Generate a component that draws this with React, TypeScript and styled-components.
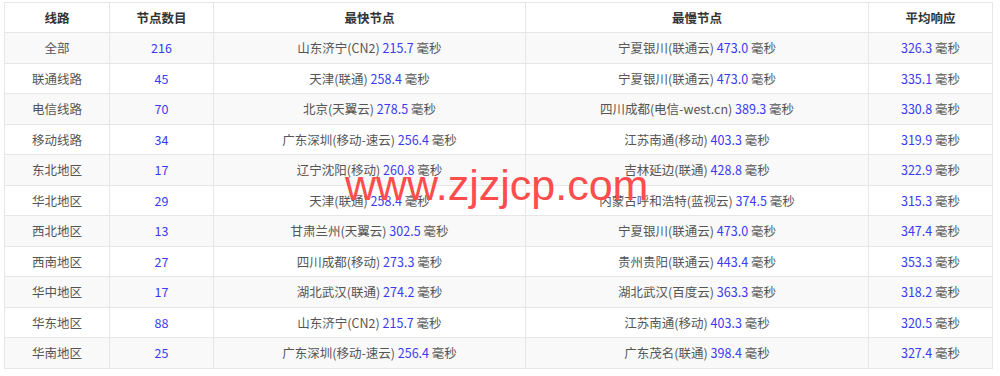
import React from "react";
import styled, { createGlobalStyle } from "styled-components";

const Global = createGlobalStyle`
  html, body { margin: 0; padding: 0; background: #fff; }
  body { font-family: "Microsoft YaHei", "Noto Sans CJK SC", "Noto Sans", sans-serif; }
`;

const Page = styled.div`
  position: relative;
  padding: 2px 8px 0 4px;
  width: 1000px;
  height: 376px;
  box-sizing: border-box;
`;

const Table = styled.table`
  width: 988px;
  border-collapse: collapse;
  table-layout: fixed;
  font-size: 12.5px;
  color: #555;
`;

const HeadCell = styled.th<{ $w: number }>`
  width: ${(p) => p.$w}px;
  border: 1px solid #e6e6e6;
  font-weight: bold;
  color: #333;
  text-align: center;
  height: 30px;
  padding: 0;
  box-sizing: border-box;
`;

const Row = styled.tr<{ $odd: boolean }>`
  background: ${(p) => (p.$odd ? "#f9f9f9" : "#fff")};
`;

const Cell = styled.td`
  border: 1px solid #e6e6e6;
  text-align: center;
  height: 30.5px;
  padding: 0;
  box-sizing: border-box;
  white-space: nowrap;
`;

const Num = styled.span`
  color: #3a3af2;
`;

const Watermark = styled.div`
  position: absolute;
  left: 345px;
  top: 160px;
  font-family: "Liberation Sans", Arial, sans-serif;
  font-size: 43px;
  line-height: 50px;
  color: #ff4d4d;
  pointer-events: none;
`;

type R = [string, string, string, string, string, string, string];

const rows: R[] = [
  ["全部", "216", "山东济宁(CN2)", "215.7", "宁夏银川(联通云)", "473.0", "326.3"],
  ["联通线路", "45", "天津(联通)", "258.4", "宁夏银川(联通云)", "473.0", "335.1"],
  ["电信线路", "70", "北京(天翼云)", "278.5", "四川成都(电信-west.cn)", "389.3", "330.8"],
  ["移动线路", "34", "广东深圳(移动-速云)", "256.4", "江苏南通(移动)", "403.3", "319.9"],
  ["东北地区", "17", "辽宁沈阳(移动)", "260.8", "吉林延边(联通)", "428.8", "322.9"],
  ["华北地区", "29", "天津(联通)", "258.4", "内蒙古呼和浩特(蓝视云)", "374.5", "315.3"],
  ["西北地区", "13", "甘肃兰州(天翼云)", "302.5", "宁夏银川(联通云)", "473.0", "347.4"],
  ["西南地区", "27", "四川成都(移动)", "273.3", "贵州贵阳(联通云)", "443.4", "353.3"],
  ["华中地区", "17", "湖北武汉(联通)", "274.2", "湖北武汉(百度云)", "363.3", "318.2"],
  ["华东地区", "88", "山东济宁(CN2)", "215.7", "江苏南通(移动)", "403.3", "320.5"],
  ["华南地区", "25", "广东深圳(移动-速云)", "256.4", "广东茂名(联通)", "398.4", "327.4"],
];

const heads: [string, number][] = [
  ["线路", 105],
  ["节点数目", 104],
  ["最快节点", 312],
  ["最慢节点", 343],
  ["平均响应", 124],
];

export default function App() {
  return (
    <>
      <Global />
      <Page>
        <Table>
          <thead>
            <tr>
              {heads.map(([h, w]) => (
                <HeadCell key={h} $w={w}>
                  {h}
                </HeadCell>
              ))}
            </tr>
          </thead>
          <tbody>
            {rows.map((r, i) => (
              <Row key={r[0]} $odd={i % 2 === 0}>
                <Cell>{r[0]}</Cell>
                <Cell>
                  <Num>{r[1]}</Num>
                </Cell>
                <Cell>
                  {r[2]} <Num>{r[3]}</Num> 毫秒
                </Cell>
                <Cell>
                  {r[4]} <Num>{r[5]}</Num> 毫秒
                </Cell>
                <Cell>
                  <Num>{r[6]}</Num> 毫秒
                </Cell>
              </Row>
            ))}
          </tbody>
        </Table>
        <Watermark>www.zjzjcp.com</Watermark>
      </Page>
    </>
  );
}
